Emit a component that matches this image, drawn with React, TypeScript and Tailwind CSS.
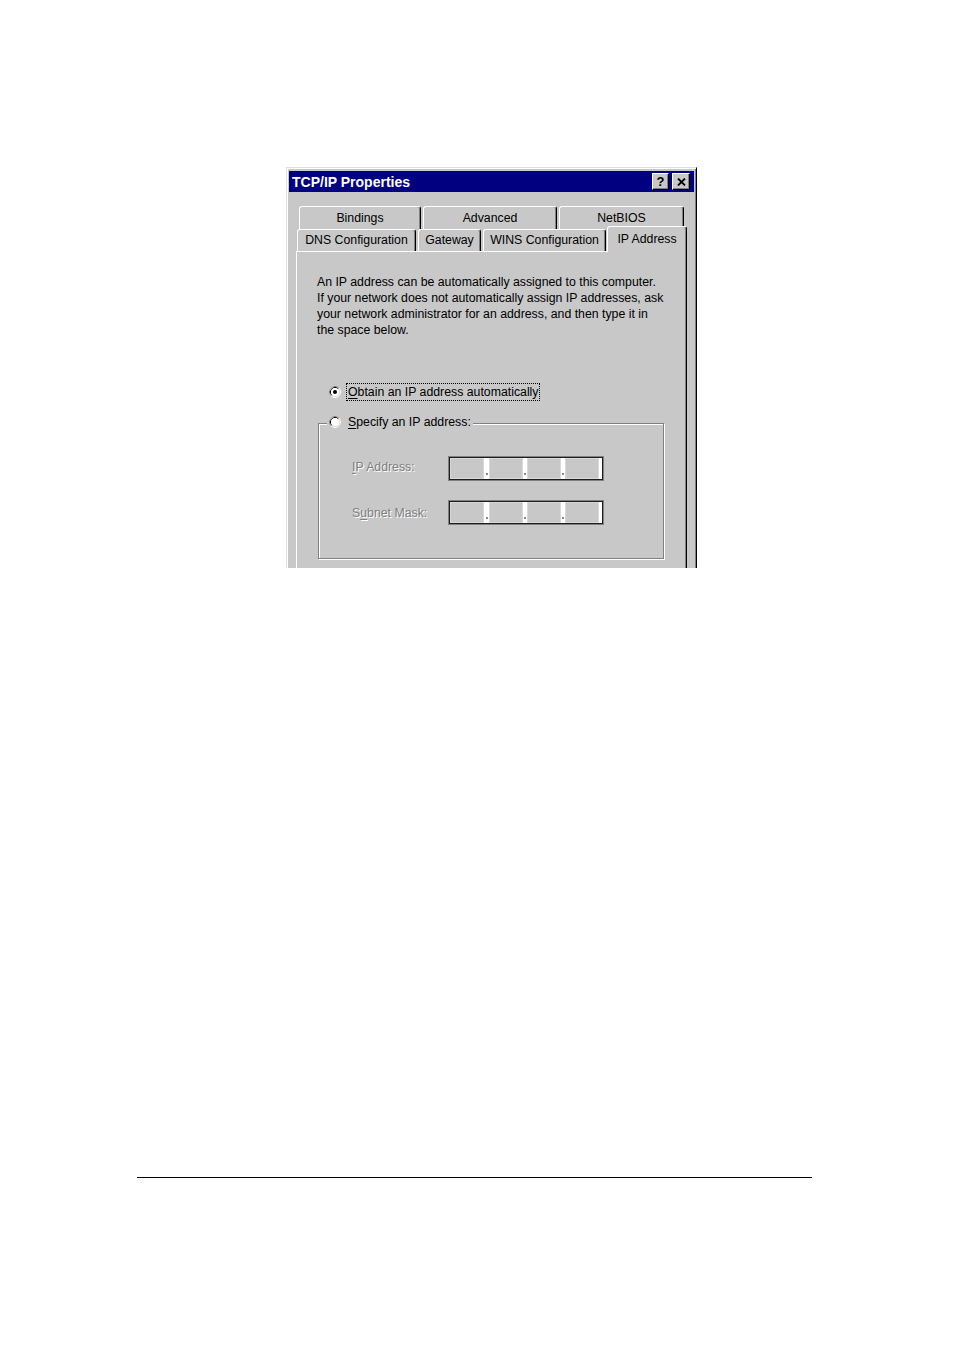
import React from "react";

const FONT = "font-['Liberation_Sans',Arial,sans-serif]";

function Radio({ checked }: { checked?: boolean }) {
  return (
    <svg width="12" height="12" viewBox="0 0 12 12" className="shrink-0">
      <circle cx="6" cy="6" r="5.5" fill="none" stroke="#ffffff" strokeWidth="1" />
      <path d="M 2.11 9.89 A 5.5 5.5 0 0 1 9.89 2.11" fill="none" stroke="#808080" strokeWidth="1" />
      <circle cx="6" cy="6" r="4.5" fill="none" stroke="#dfdfdf" strokeWidth="1" />
      <path d="M 2.82 9.18 A 4.5 4.5 0 0 1 9.18 2.82" fill="none" stroke="#000000" strokeWidth="1" />
      <circle cx="6" cy="6" r="4" fill="#ffffff" />
      {checked && <circle cx="6" cy="6" r="2" fill="#000000" />}
    </svg>
  );
}

function Tab({ label, w, selected }: { label: string; w: string; selected?: boolean }) {
  return (
    <div
      className={`${w} ${
        selected ? "h-[26px] -mb-[1px] relative z-10 pb-[1px]" : "h-full"
      } flex items-center justify-center rounded-t-[3px] border-l border-t border-r border-l-white border-t-white border-r-black bg-[#c8c8c8] shadow-[inset_-1px_0_0_#808080] text-[12.3px] text-black whitespace-nowrap`}
    >
      {label}
    </div>
  );
}

function Sep({ w }: { w: string }) {
  return (
    <div className={`${w} h-full bg-white flex flex-col items-center justify-end pb-[4px]`}>
      <div className="w-[2px] h-[2px] bg-[#8a8a8a]" />
    </div>
  );
}

function Seg() {
  return <div className="w-[34px] h-full bg-[#c8c8c8] border border-[#d8d8d8]" />;
}

function IpBox() {
  return (
    <div className="w-[156px] h-[25px] border border-[#808080]">
      <div className="w-full h-full border border-[#1e1e1e] bg-white flex">
        <Seg />
        <Sep w="w-[5px]" />
        <Seg />
        <Sep w="w-[4px]" />
        <Seg />
        <Sep w="w-[4px]" />
        <Seg />
      </div>
    </div>
  );
}

export default function App() {
  return (
    <div className={`w-[954px] h-[1348px] bg-white flex flex-col ${FONT}`}>
      <div className="mt-[167px] ml-[286px] w-[411px] h-[401px] overflow-hidden">
        <div className="w-[411px] h-[480px] flex flex-col bg-[#c8c8c8] border border-t-[#dfdfdf] border-l-[#dfdfdf] border-r-black border-b-black shadow-[inset_1px_1px_0_#ffffff,inset_-1px_-1px_0_#808080] px-[2px] pt-[3px] pb-[2px]">
          {/* Title bar */}
          <div className="h-[21px] bg-[#000080] flex items-center pl-[3px] pr-[4px]">
            <span className="text-white font-bold text-[14px] leading-none">TCP/IP Properties</span>
            <div className="ml-auto flex gap-[3px]">
              <div className="w-[17px] h-[17px] bg-[#c8c8c8] border border-t-white border-l-white border-r-black border-b-black shadow-[inset_-1px_-1px_0_#808080] flex items-center justify-center text-[13px] font-bold text-black leading-none">
                ?
              </div>
              <div className="w-[18px] h-[17px] bg-[#c8c8c8] border border-t-white border-l-white border-r-black border-b-black shadow-[inset_-1px_-1px_0_#808080] flex items-center justify-center">
                <svg width="9" height="8" viewBox="0 0 9 8">
                  <path d="M1 0.5 L8 7.5 M8 0.5 L1 7.5" stroke="#000" strokeWidth="1.8" fill="none" />
                </svg>
              </div>
            </div>
          </div>

          {/* Body */}
          <div className="flex-1 flex flex-col px-[7px] pt-[14px]">
            {/* Tab row 1 */}
            <div className="h-[23px] flex gap-[2px] ml-[3px]">
              <Tab label="Bindings" w="w-[122px]" />
              <Tab label="Advanced" w="w-[134px]" />
              <Tab label="NetBIOS" w="w-[125px]" />
            </div>
            {/* Tab row 2 */}
            <div className="h-[22px] flex items-end ml-[1px]">
              <Tab label="DNS Configuration" w="w-[119px]" />
              <div className="w-[2px]" />
              <Tab label="Gateway" w="w-[63px]" />
              <div className="w-[2px]" />
              <Tab label="WINS Configuration" w="w-[123px]" />
              <div className="w-[1px]" />
              <Tab label="IP Address" w="w-[80px]" selected />
            </div>

            {/* Panel */}
            <div className="flex-1 border-l border-t border-r border-l-white border-t-white border-r-black shadow-[inset_-1px_0_0_#808080] pl-[20px] pt-[22px] flex flex-col text-[12.3px] text-black">
              <div className="leading-[16px] whitespace-nowrap">
                <div>An IP address can be automatically assigned to this computer.</div>
                <div>If your network does not automatically assign IP addresses, ask</div>
                <div>your network administrator for an address, and then type it in</div>
                <div>the space below.</div>
              </div>

              <div className="mt-[45px] ml-[12px] h-[18px] flex items-center">
                <Radio checked />
                <div className="ml-[5px] h-[18px] border border-dotted border-black pl-[1px] flex items-center leading-[16px] whitespace-nowrap">
                  <span>
                    <span className="underline underline-offset-[2px]">O</span>btain an IP address automatically
                  </span>
                </div>
              </div>

              <div className="mt-[22px] ml-[1px] w-[346px] h-[136px] border border-[#808080] shadow-[inset_1px_1px_0_#ffffff,1px_1px_0_#ffffff] flex flex-col">
                <div className="-mt-[9px] ml-[8px] h-[14px] self-start bg-[#c8c8c8] pl-[2px] pr-[2px] flex items-center whitespace-nowrap">
                  <Radio />
                  <span className="ml-[7px] leading-[14px]">
                    <span className="underline underline-offset-[2px]">S</span>pecify an IP address:
                  </span>
                </div>

                <div className="mt-[27px] pl-[33px] flex items-center">
                  <div className="w-[96px] -mt-[3px] text-[#808080] [text-shadow:1px_1px_0_#ffffff] whitespace-nowrap">
                    <span className="underline underline-offset-[2px]">I</span>P Address:
                  </div>
                  <IpBox />
                </div>

                <div className="mt-[19px] pl-[33px] flex items-center">
                  <div className="w-[96px] mt-[1px] text-[#808080] [text-shadow:1px_1px_0_#ffffff] whitespace-nowrap">
                    S<span className="underline underline-offset-[2px]">u</span>bnet Mask:
                  </div>
                  <IpBox />
                </div>
              </div>
            </div>
          </div>
        </div>
      </div>

      <div className="mt-[609px] ml-[137px] w-[675px] h-[1px] bg-black" />
    </div>
  );
}
